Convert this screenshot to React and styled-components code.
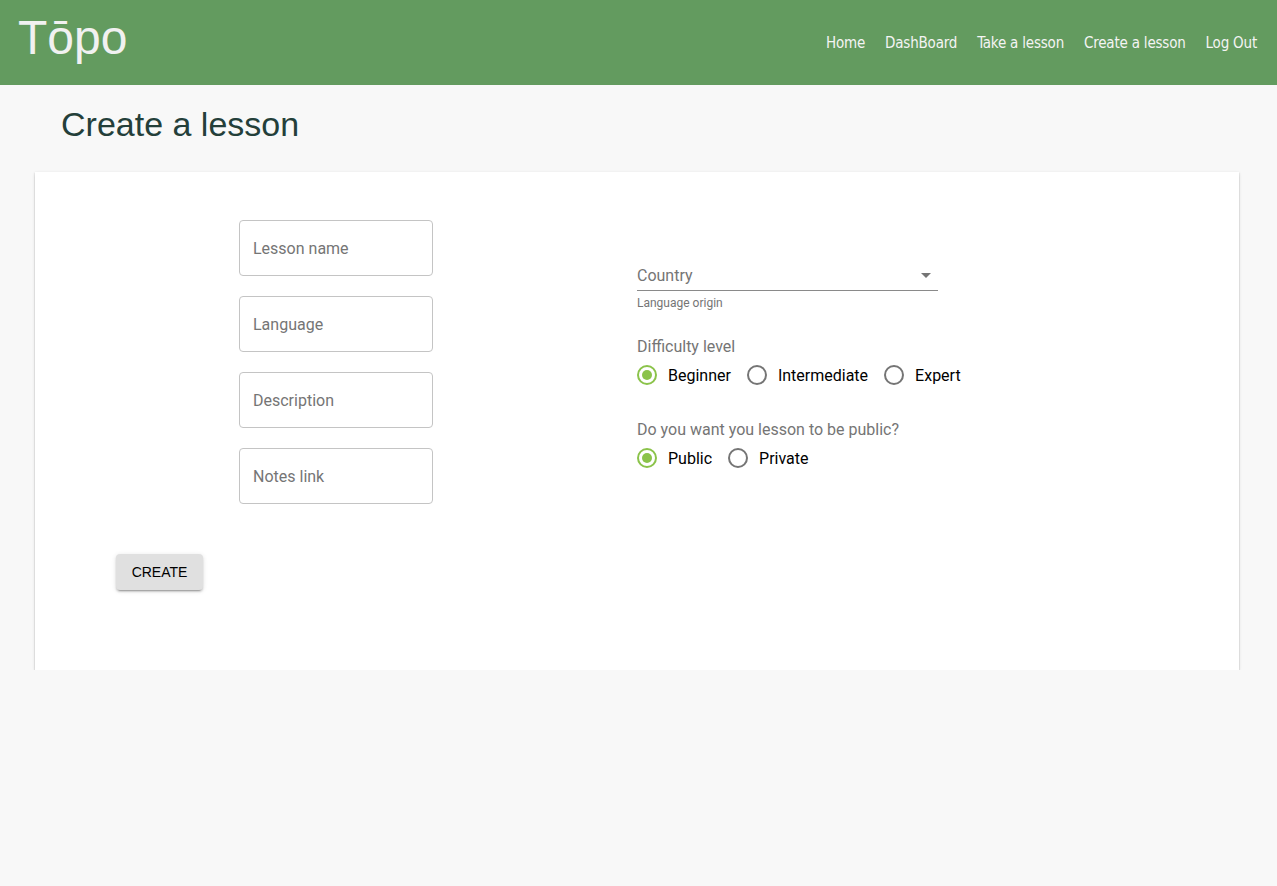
import * as React from 'react';
import styled, { createGlobalStyle } from "styled-components";

const GlobalStyle = createGlobalStyle`
    body {
        margin: 0;
        background: #f8f8f8;
        font-family: Roboto, "Liberation Sans", Arial, sans-serif;
    }
`;

const navLinks = ["Home", "DashBoard", "Take a lesson", "Create a lesson", "Log Out"];
const fields = ["Lesson name", "Language", "Description", "Notes link"];

const RadioItem = ({ label, checked }) => (
    <RadioLabel>
        <RadioCircle checked={checked} />
        {label}
    </RadioLabel>
);

const App = () => {
    return (
        <>
        <GlobalStyle />
        <Header>
            <Logo>Tōpo</Logo>
            <Nav>
                {navLinks.map(link => <NavLink key={link}>{link}</NavLink>)}
            </Nav>
        </Header>
        <Title>Create a lesson</Title>
        <Card>
            <Columns>
                <LeftCol>
                    {fields.map(f => (
                        <Field key={f}>{f}</Field>
                    ))}
                </LeftCol>
                <RightCol>
                    <SelectBox>
                        <span>Country</span>
                        <Arrow />
                    </SelectBox>
                    <Helper>Language origin</Helper>
                    <Group>
                        <GroupLabel>Difficulty level</GroupLabel>
                        <RadioRow>
                            <RadioItem label="Beginner" checked />
                            <RadioItem label="Intermediate" />
                            <RadioItem label="Expert" />
                        </RadioRow>
                    </Group>
                    <Group>
                        <GroupLabel>Do you want you lesson to be public?</GroupLabel>
                        <RadioRow>
                            <RadioItem label="Public" checked />
                            <RadioItem label="Private" />
                        </RadioRow>
                    </Group>
                </RightCol>
            </Columns>
            <Button>CREATE</Button>
        </Card>
        </>
    )
}

export default App;

const Header = styled.header`
    height: 85px;
    background: #639b5f;
    display: flex;
    align-items: center;
    justify-content: space-between;
    padding: 0 20px 0 18px;
`;
const Logo = styled.div`
    font-family: "Liberation Sans", Arial, sans-serif;
    font-size: 48px;
    color: #f1f1f1;
    margin-top: -10px;
`;
const Nav = styled.nav`
    display: flex;
    gap: 20px;
    margin-top: 1px;
`;
const NavLink = styled.a`
    font-family: "DejaVu Sans Condensed", "DejaVu Sans", sans-serif;
    font-size: 15px;
    letter-spacing: -0.2px;
    color: #f4f4f4;
`;
const Title = styled.h1`
    margin: 20px 0 28px 61px;
    font-weight: 400;
    font-size: 34px;
    color: #243f3a;
    font-family: "Liberation Sans", Arial, sans-serif;
`;
const Card = styled.div`
    margin: 0 38px 0 35px;
    background: #fff;
    box-shadow: 0 3px 2px -1px rgba(0,0,0,0.3), 0 1px 1px 0 rgba(0,0,0,0.2), 0 1px 3px 0 rgba(0,0,0,0.15);
    padding: 48px 0 80px;
`;
const Columns = styled.div`
    display: grid;
    grid-template-columns: 1fr 1fr;
`;
const LeftCol = styled.div`
    display: flex;
    flex-direction: column;
    align-items: center;
    gap: 20px;
`;
const Field = styled.div`
    width: 194px;
    height: 56px;
    box-sizing: border-box;
    border: 1px solid #c4c4c4;
    border-radius: 4px;
    padding: 0 13px;
    display: flex;
    align-items: center;
    font-size: 16px;
    color: #757575;
`;
const RightCol = styled.div`
    padding-top: 41px;
`;
const SelectBox = styled.div`
    width: 301px;
    height: 28px;
    border-bottom: 1px solid #8a8a8a;
    display: flex;
    align-items: center;
    justify-content: space-between;
    font-size: 16px;
    color: #757575;
    padding-bottom: 1px;
`;
const Arrow = styled.span`
    width: 0;
    height: 0;
    border-left: 5px solid transparent;
    border-right: 5px solid transparent;
    border-top: 5px solid #757575;
    margin-right: 7px;
`;
const Helper = styled.div`
    font-size: 12px;
    color: #757575;
    margin-top: 5px;
`;
const Group = styled.div`
    margin-top: 27px;
    &:last-child {
        margin-top: 35px;
    }
`;
const GroupLabel = styled.div`
    font-size: 16px;
    color: #757575;
`;
const RadioRow = styled.div`
    display: flex;
    gap: 16px;
    margin-top: 9px;
`;
const RadioLabel = styled.label`
    display: flex;
    align-items: center;
    gap: 11px;
    font-size: 16px;
    color: #000;
`;
const RadioCircle = styled.span`
    width: 20px;
    height: 20px;
    box-sizing: border-box;
    border-radius: 50%;
    border: 2px solid ${props => props.checked ? "#8bc34a" : "#757575"};
    display: flex;
    align-items: center;
    justify-content: center;
    &::after {
        content: "";
        width: 10px;
        height: 10px;
        border-radius: 50%;
        background: ${props => props.checked ? "#8bc34a" : "transparent"};
    }
`;
const Button = styled.button`
    margin: 50px 0 0 81px;
    width: 87px;
    height: 36px;
    border: none;
    border-radius: 4px;
    background: #e0e0e0;
    font-family: "Liberation Sans", Arial, sans-serif;
    font-size: 14px;
    color: #000;
    box-shadow: 0 3px 1px -2px rgba(0,0,0,0.2), 0 2px 2px 0 rgba(0,0,0,0.14), 0 1px 5px 0 rgba(0,0,0,0.12);
`;
